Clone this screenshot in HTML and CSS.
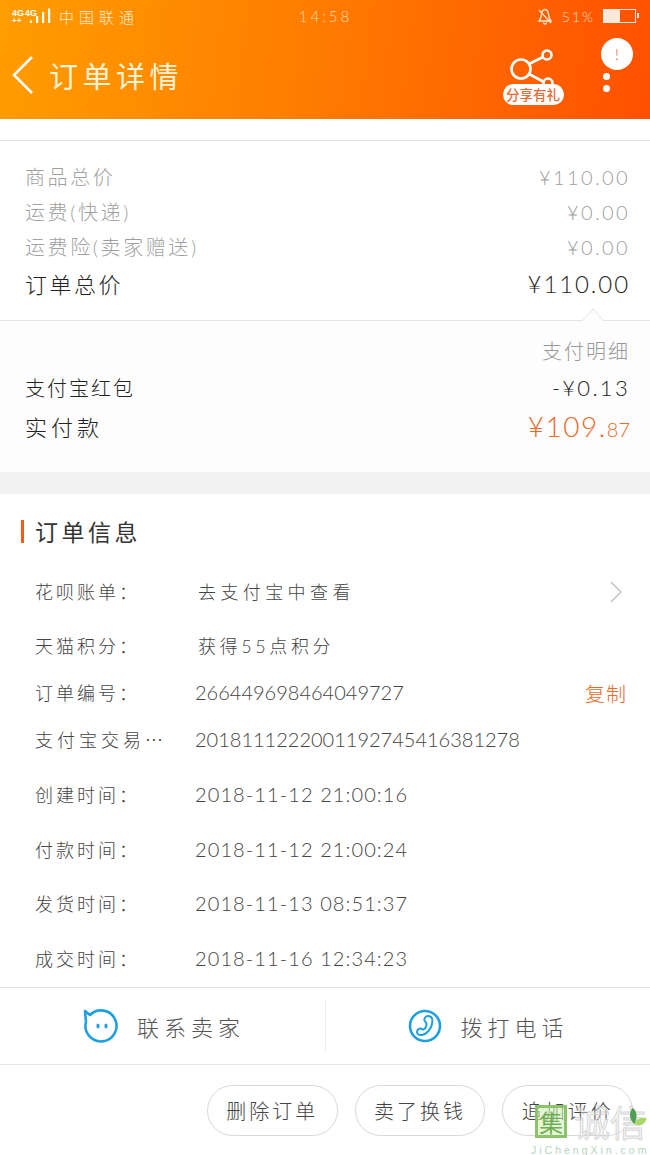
FILE: index.html
```html
<!DOCTYPE html>
<html lang="zh">
<head>
<meta charset="utf-8">
<title>订单详情</title>
<link rel="stylesheet" href="styles.css">
</head>
<body>
<div class="phone">
  <header class="top">
    <div class="status">
      <div class="status-left">
        <span class="net"><span class="net-g"><span>4G</span><span>4G</span></span><span class="net-arrows">++</span></span>
        <svg class="signal" width="22" height="16" viewBox="0 0 22 16"><path d="M1 12.500h2V15H1zM7 8h2.200v7H7zM13 4h2.200v11H13zM19 .5h2.200V15H19z" fill="#fff"/></svg>
        <span class="carrier">中国联通</span>
      </div>
      <div class="time">14:58</div>
      <div class="status-right">
        <svg class="bell" width="18" height="18" viewBox="0 0 18 18"><path d="M3 14c2-2 2-4 2.500-7C6 4 7.500 2.500 9 2.500S12 4 12.500 7c.5 3 .5 5 2.500 7zM7.500 15.500a1.500 1.500 0 0 0 3 0M3 3l12 13" fill="none" stroke="#ffe3c8" stroke-width="1.400"/></svg>
        <span class="pct">51%</span>
        <span class="battery"><span class="battery-fill"></span></span>
      </div>
    </div>
    <div class="nav">
      <svg class="back" width="24" height="40" viewBox="0 0 24 40"><path d="M21 2 3 20l18 18" fill="none" stroke="#fff" stroke-width="2.600"/></svg>
      <h1 class="title">订单详情</h1>
      <div class="share">
        <svg width="46" height="38" viewBox="0 0 46 38"><g fill="none" stroke="#fff" stroke-width="2.600"><circle cx="37" cy="6" r="4.500"/><circle cx="11" cy="20" r="9.500"/><circle cx="38" cy="34" r="4.500"/><path d="m19 15 14-7M19 25l15 8"/></g></svg>
        <span class="share-badge">分享有礼</span>
      </div>
      <div class="more">
        <span class="bubble">!</span>
        <span class="dot"></span>
        <span class="dot"></span>
      </div>
    </div>
  </header>

  <div class="gap-white"></div>

  <section class="summary">
    <div class="row muted"><span>商品总价</span><span class="num">¥110.00</span></div>
    <div class="row muted"><span>运费(快递)</span><span class="num">¥0.00</span></div>
    <div class="row muted"><span>运费险(卖家赠送)</span><span class="num">¥0.00</span></div>
    <div class="row total"><span>订单总价</span><span class="num">¥110.00</span></div>
  </section>

  <section class="pay">
    <svg class="caret" width="24" height="13" viewBox="0 0 24 13"><path d="M1 13 12 1l11 12" fill="#fdfdfd" stroke="#e2e2e2"/></svg>
    <div class="row pay-head"><span></span><span>支付明细</span></div>
    <div class="row pay-line"><span>支付宝红包</span><span class="num">-¥0.13</span></div>
    <div class="row pay-total"><span>实付款</span><span class="amount">¥109.<small>87</small></span></div>
  </section>

  <div class="gap-gray"></div>

  <section class="info">
    <h2 class="info-title">订单信息</h2>
    <div class="info-row h54"><span class="key">花呗账单：</span><span class="val val-wide">去支付宝中查看</span>
      <svg class="chev" width="14" height="22" viewBox="0 0 14 22"><path d="m2 1 10 10L2 21" fill="none" stroke="#c4c4c4" stroke-width="1.600"/></svg></div>
    <div class="info-row h54"><span class="key">天猫积分：</span><span class="val">获得55点积分</span></div>
    <div class="info-row h40"><span class="key">订单编号：</span><span class="num-val">266449698464049727</span><span class="copy">复制</span></div>
    <div class="info-row h54"><span class="key key-long">支付宝交易…</span><span class="num-val">2018111222001192745416381278</span></div>
    <div class="info-row h55"><span class="key">创建时间：</span><span class="num-val date">2018-11-12 21:00:16</span></div>
    <div class="info-row h55"><span class="key">付款时间：</span><span class="num-val date">2018-11-12 21:00:24</span></div>
    <div class="info-row h54"><span class="key">发货时间：</span><span class="num-val date">2018-11-13 08:51:37</span></div>
    <div class="info-row h55"><span class="key">成交时间：</span><span class="num-val date">2018-11-16 12:34:23</span></div>
  </section>

  <section class="contact">
    <div class="contact-cell first">
      <svg width="36" height="36" viewBox="0 0 36 36"><path d="M7 7a15.500 15.500 0 1 1-4 7L2 3z" fill="none" stroke="#1e9fe0" stroke-width="2.600" stroke-linejoin="round"/><ellipse cx="15" cy="18" rx="1.600" ry="2.600" fill="#1e9fe0"/><ellipse cx="23" cy="18" rx="1.600" ry="2.600" fill="#1e9fe0"/></svg>
      <span>联系卖家</span>
    </div>
    <div class="contact-cell second">
      <svg width="36" height="36" viewBox="0 0 36 36"><circle cx="18" cy="18" r="15" fill="none" stroke="#1e9fe0" stroke-width="2.600"/><path d="M21 8c4 0 5 3 4 8-1 5-5 10-10 11-3 .5-5-1-5-3 0-2 2-4 4-3.500 1 .3 1.500 1.500 2.500 1 2-1 3-4 3-6 0-1.500-1.500-1.500-2-3-.5-2 1-4.500 3.500-4.500z" fill="none" stroke="#1e9fe0" stroke-width="2"/></svg>
      <span>拨打电话</span>
    </div>
  </section>

  <section class="actions">
    <button class="pill">删除订单</button>
    <button class="pill">卖了换钱</button>
    <button class="pill">追加评价</button>
  </section>

  <div class="watermark">
    <div class="wm-main">
      <span class="wm-box">集</span>
      <span class="wm-text">诚信</span>
      <svg class="wm-leaf" width="20" height="22" viewBox="3 2 19 22"><path d="M7 2c5 3 5 10 2 16C4 15 3 6 7 2z" fill="#4f9f55"/><path d="M9 18c2-6 8-7 12-6-1 6-6 9-12 6z" fill="#a8d868"/></svg>
    </div>
    <div class="wm-url">JiChengXin.com</div>
  </div>
</div>
</body>
</html>
```

FILE: styles.css
```css
* { box-sizing: border-box; margin: 0; padding: 0; }
html, body { background: #fff; }
body {
  width: 650px;
  height: 1155px;
  overflow: hidden;
  font-family: "Lato", "Noto Sans CJK SC", sans-serif;
  font-weight: 300;
  color: #333;
}
.phone { position: relative; width: 650px; height: 1155px; overflow: hidden; background: #fff; }

.top { height: 119px; background: linear-gradient(97deg, #ff9d00 0%, #ff7c00 48%, #ff5000 100%); color: #fff; }
.status { height: 32px; display: grid; grid-template-columns: 1fr auto 1fr; align-items: center; padding: 0 11px 0 12px; }
.status-left { display: flex; align-items: center; }
.net { display: flex; flex-direction: column; width: 28px; color: #fff; font: 700 9px/9px "Liberation Sans", sans-serif; }
.net-g { display: flex; gap: 1px; }
.net-arrows { font-size: 8px; line-height: 6px; letter-spacing: 0; }
.signal { margin-left: -11px; }
.carrier { font-size: 15px; letter-spacing: 5px; margin-left: 8px; color: #ffe9cf; }
.time { font-size: 15px; letter-spacing: 3px; color: #ffd9b0; }
.status-right { display: flex; align-items: center; justify-content: flex-end; gap: 8px; }
.pct { font-size: 14px; letter-spacing: 2px; color: #ffdcc0; }
.battery { width: 33px; height: 14px; border: 1.500px solid #ffe9d9; display: block; position: relative; margin-right: 3px; }
.battery::after { content: ""; position: absolute; right: -4px; top: 3px; width: 2px; height: 5px; background: #ffe9d9; }
.battery-fill { display: block; width: 50%; height: 100%; background: #ffe9d9; }
.nav { height: 87px; position: relative; display: flex; align-items: center; padding-left: 11px; }
.back { margin-top: -1px; }
.title { font-size: 29px; font-weight: 400; letter-spacing: 4.500px; margin: -2px 0 0 14px; color: #fff3d8; }
.share { position: absolute; left: 502px; top: 17px; width: 62px; display: flex; flex-direction: column; align-items: center; }
.share-badge { display: block; margin-top: -3px; width: 61px; height: 21px; border-radius: 11px; background: #fff; color: #ea6a34; font: 500 13.500px/21px "Noto Sans CJK SC", sans-serif; text-align: center; }
.more { position: absolute; left: 601px; top: 6px; display: flex; flex-direction: column; align-items: center; width: 32px; }
.bubble { width: 32px; height: 32px; border-radius: 50%; background: #fff; color: #d9553a; font-size: 15px; line-height: 32px; text-align: center; margin-bottom: -2.500px; }
.dot { width: 7px; height: 7px; border-radius: 50%; background: #fff; margin-top: 5px; margin-right: 21px; }

.gap-white { height: 22px; border-bottom: 1px solid #dfdfdf; }

.summary { height: 180px; padding: 18px 20px 0 25px; border-bottom: 1px solid #e4e4e4; }
.row { display: flex; justify-content: space-between; align-items: center; }
.muted { height: 35px; color: #a0a0a0; font-size: 20px; letter-spacing: 2.600px; }
.muted .num { letter-spacing: 2.400px; }
.total { height: 38px; color: #222; font-size: 22px; letter-spacing: 2.500px; }
.total .num { font-size: 24px; letter-spacing: 1.900px; }

.pay { position: relative; height: 151px; background: #fdfdfd; padding: 14px 20px 0 25px; }
.caret { position: absolute; right: 45px; top: -13px; }
.pay-head { height: 30px; justify-content: space-between; color: #999; font-size: 20px; letter-spacing: 2px; }
.pay-line { height: 44px; color: #222; font-size: 20px; letter-spacing: 2px; }
.pay-line .num { font-size: 22px; letter-spacing: 2.300px; }
.pay-total { height: 33px; color: #222; font-size: 22px; letter-spacing: 4px; }
.amount { color: #ea6a2c; font-size: 28px; letter-spacing: 1.500px; }
.amount small { font-size: 20px; letter-spacing: 0; }

.gap-gray { height: 22px; background: #f2f2f2; }

.info { height: 493px; }
.info-title { height: 70px; margin-left: 21px; display: flex; align-items: center; font-size: 23px; font-weight: 400; letter-spacing: 3.500px; color: #333; position: relative; padding: 3px 0 0 14px; }
.info-title::before { content: ""; position: absolute; left: 0; top: 26px; width: 3px; height: 23px; background: #f05a1a; }
.info-row { display: flex; align-items: center; padding-left: 35px; font-size: 18px; color: #444; position: relative; }
.h54 { height: 54px; }
.h55 { height: 55px; }
.h40 { height: 40px; }
.key { width: 160px; letter-spacing: 3px; white-space: nowrap; }
.key-long { font-family: "Noto Sans CJK SC", sans-serif; letter-spacing: 4px; }
.val { margin-left: 3px; letter-spacing: 3.600px; }
.val-wide { letter-spacing: 4.400px; }
.num-val { font-size: 20px; letter-spacing: 0; white-space: nowrap; }
.date { letter-spacing: 1.100px; }
.chev { position: absolute; left: 609px; top: 17px; }
.copy { position: absolute; left: 585px; top: 7px; color: #ea6a2c; font-size: 20px; letter-spacing: 1px; }

.contact { height: 78px; border-top: 1px solid #e0e0e0; border-bottom: 1px solid #e6e6e6; display: grid; grid-template-columns: 325px 325px; align-items: center; }
.contact-cell { height: 50px; display: flex; align-items: center; justify-content: center; gap: 18px; color: #555; font-size: 22px; letter-spacing: 5px; }
.contact-cell.first { padding-left: 3px; }
.contact-cell.second { border-left: 1px solid #eaeaea; gap: 17px; }

.actions { display: flex; justify-content: flex-end; gap: 17px; padding: 20px 17px 0 0; }
.pill { width: 130.670px; height: 51px; border-radius: 26px; background: #fff; border: 1px solid #d9d9d9; color: #444; font: 300 20px "Lato", "Noto Sans CJK SC", sans-serif; letter-spacing: 3px; }

.watermark { position: absolute; left: 535px; top: 1104px; width: 115px; }
.wm-main { display: flex; align-items: center; height: 34px; position: relative; }
.wm-box { width: 32px; height: 33px; border: 3px solid #8cc26a; background: rgba(210, 240, 180, .55); color: #6fae55; font: 400 24px/27px "Noto Sans CJK SC", sans-serif; text-align: center; }
.wm-text { margin-left: 7px; color: rgba(235, 235, 235, .45); -webkit-text-stroke: 1px rgba(205, 205, 205, .8); font: 400 36px/34px "Noto Sans CJK SC", sans-serif; white-space: nowrap; }
.wm-leaf { position: absolute; left: 93px; top: 4px; }
.wm-url { margin: 7px 0 0 -4px; font: 400 10.500px/10px "Liberation Sans", sans-serif; letter-spacing: 3px; color: #b4d6bc; white-space: nowrap; }
```
